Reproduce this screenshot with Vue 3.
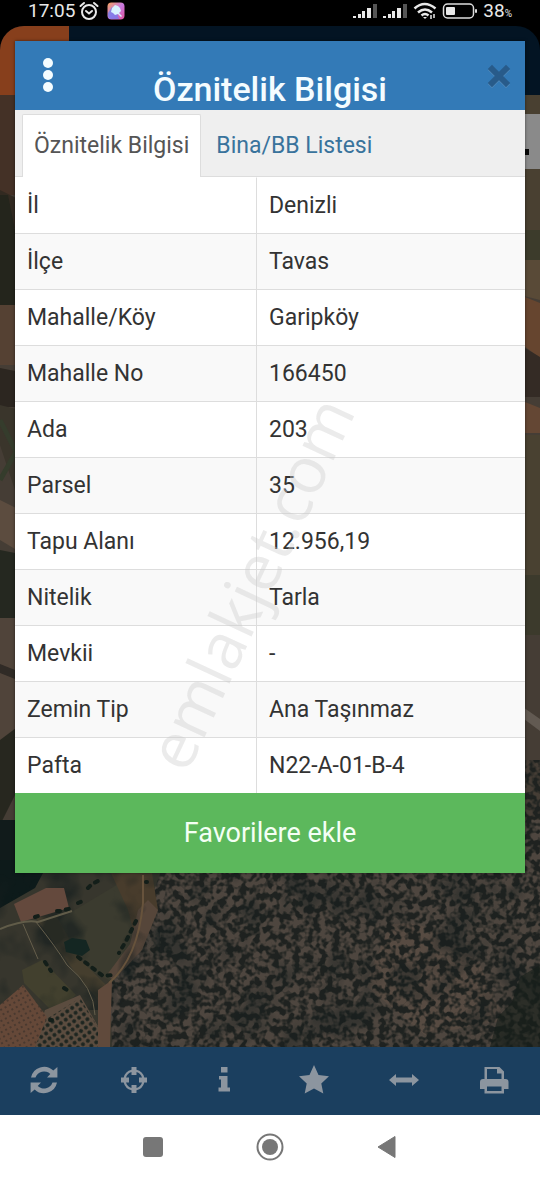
<template>
  <div class="phone">
    <header class="status-bar">
      <div class="status-group">
        <span class="status-time">17:05</span>
        <svg class="icon-alarm" viewBox="0 0 20 20" fill="none" stroke="#e8e8e8" stroke-width="2" stroke-linecap="round">
          <circle cx="10" cy="11" r="7" />
          <path d="M7 10l3 2.500 3-2.500M1.500 5l3.500-3M18.500 5l-3.500-3" />
        </svg>
        <svg class="icon-app" viewBox="0 0 18 18">
          <defs>
            <linearGradient id="appTint" x1="0" y1="0" x2="1" y2="1">
              <stop offset="0" stop-color="#f7a35b" />
              <stop offset="0.5" stop-color="#c77ae0" />
              <stop offset="1" stop-color="#e0529a" />
            </linearGradient>
          </defs>
          <rect x="0.500" y="0.500" width="17" height="17" rx="4" fill="url(#appTint)" />
          <path d="M1 11l4-6 4 3 3 9H5q-4 0-4-4z" fill="#6b7df0" opacity="0.7" />
          <path d="M5 6l3-3 3 1 2 2 1 3-2 2 3 3-1 1-3-3-3 1-2-2-2-1z" fill="#d9f3ff" />
        </svg>
      </div>
      <div class="status-group status-right">
        <svg v-for="n in 2" :key="n" class="icon-signal" viewBox="0 0 25 16">
          <path d="M0 13h3v2H0zM5 11h3v4H5zM9 8h3v7H9zM14 5h4v10h-4z" fill="#e8e8e8" />
          <path d="M20 1h4v14h-4z" fill="#555" />
        </svg>
        <svg class="icon-wifi" viewBox="0 0 24 18" fill="none" stroke="#e8e8e8" stroke-width="2.500">
          <path d="M1.500 6.500q10-9 21 0M5 10.500q7-6 14 0M8.500 13.500q3.500-3 7 0" />
          <path d="M10 15l2 2 2-2z" fill="#e8e8e8" stroke="none" />
          <path d="M18 13v4M21 12v4" stroke-width="1.500" />
        </svg>
        <svg class="icon-battery" viewBox="0 0 36 16">
          <rect x="1.500" y="1" width="30" height="14" rx="4" fill="none" stroke="#ddd" stroke-width="1.500" />
          <rect x="4" y="4" width="9" height="8" rx="1" fill="#e8e8e8" />
          <rect x="33" y="6" width="2" height="4" rx="1" fill="#ddd" />
        </svg>
        <span class="status-percent">38<small>%</small></span>
      </div>
    </header>

    <main class="stage">
      <div class="backdrop" aria-hidden="true">
        <div class="app-bar"><div class="app-bar-mark"></div></div>
        <svg class="map" viewBox="0 95 540 952" preserveAspectRatio="xMidYMax slice">
          <defs>
            <filter id="trees" x="0" y="0" width="1" height="1" color-interpolation-filters="sRGB">
              <feTurbulence type="fractalNoise" baseFrequency="0.15" numOctaves="2" seed="8" />
              <feColorMatrix values="0 0 0 0 0.120  0 0 0 0 0.135  0 0 0 0 0.125  5 0 0 0 -2" />
            </filter>
            <filter id="patches" x="0" y="0" width="1" height="1" color-interpolation-filters="sRGB">
              <feTurbulence type="fractalNoise" baseFrequency="0.025" numOctaves="3" seed="4" />
              <feColorMatrix values="0 0 0 0 0.080  0 0 0 0 0.115  0 0 0 0 0.115  4 0 0 0 -1.900" />
            </filter>
            <pattern id="orchard" width="5" height="5" patternUnits="userSpaceOnUse" patternTransform="rotate(-28)">
              <rect width="5" height="5" fill="#654838" />
              <circle cx="2" cy="2" r="1" fill="#41342b" />
            </pattern>
            <pattern id="saplings" width="6" height="6" patternUnits="userSpaceOnUse" patternTransform="rotate(-35)">
              <circle cx="3" cy="3" r="2" fill="#1c241f" />
            </pattern>
          </defs>
          <rect y="95" width="540" height="952" fill="#453d35" />

          <!-- left fields -->
          <path d="M0 95h20v100H0z" fill="#443126" />
          <path d="M0 190l20 10v28H0z" fill="#322a21" />
          <path d="M0 195h8l7 35v75H0z" fill="#24251c" />
          <path d="M0 305h20v60H0z" fill="#554133" />
          <path d="M0 368l20 4v35H0z" fill="#2c2620" />
          <path d="M0 405l20 5v95l-20-60z" fill="#3a352b" />
          <path d="M0 420l20 40M0 480l20-35" stroke="#353c2c" stroke-width="5" />
          <path d="M0 500l20 10v42l-20-12z" fill="#5c4c3f" />
          <path d="M0 550l20 4v65H0z" fill="#252820" />
          <path d="M0 618h20v110l-20 15z" fill="#50443a" />
          <path d="M0 664l20 8v9l-20-8z" fill="#302b26" />
          <path d="M0 740l20-15v60l-20 40z" fill="#27271f" />
          <path d="M0 820h50v70H0z" fill="#111b1b" />

          <!-- right fields -->
          <path d="M520 95h20v140h-20z" fill="#494031" />
          <path d="M520 230h20v30h-20z" fill="#3c3b2b" />
          <path d="M520 260h20v40l-20-5z" fill="#594a37" />
          <path d="M520 295l20 8v55l-20-15z" fill="#66452f" />
          <path d="M520 345l20 12v40h-20z" fill="#342b25" />
          <path d="M520 400l20 8v25h-20z" fill="#644734" />
          <path d="M520 435h20v140h-20z" fill="#494131" />
          <path d="M520 575h20v60h-20z" fill="#3c3a2c" />
          <path d="M520 705l20 14v12l-20-15z" fill="#625a52" />

          <!-- forest -->
          <path d="M105 820h435v227H105z" fill="#4e463f" />
          <path d="M390 925q40-10 90 40l25 55-80 15-60-50z" fill="#5d4e44" opacity="0.6" />
          <rect x="105" y="760" width="435" height="287" filter="url(#trees)" />
          <rect x="105" y="820" width="435" height="227" filter="url(#patches)" opacity="0.4" />
          <path d="M540 965l-20 12-8 25-14 15-8 30h50z" fill="#151e19" opacity="0.6" />

          <!-- farm land in the lower left corner -->
          <path d="M0 860h165l-20 55-35 70 2 62H0z" fill="#37362d" />
          <path d="M0 860h50l-15 28-35 20z" fill="#0d1a1a" />
          <path d="M55 922l75-45 8 50-25 55-40-20z" fill="#3b3b2f" />
          <path d="M36 918l20-3 25 45 25 25-8 15-27-33z" fill="#453e2e" />
          <path d="M105 860h45l8 50-22 30-8-30z" fill="#483c2c" />
          <path d="M138 910l10-10 10 10-16 40-28 30-8-4 24-32z" fill="#56463a" />
          <path d="M22 970l20-10 34 35-22 18-30-30z" fill="#42402e" />
          <rect x="0" y="860" width="160" height="150" filter="url(#patches)" opacity="0.6" />
          <path d="M14 904l32-16 18 0 5 20-48 14z" fill="#64493d" />
          <path d="M45 1010l35-15 30 52H33z" fill="#5b4c3f" />
          <path d="M45 1020l35-22 30 49H33z" fill="url(#saplings)" />
          <path d="M0 1005l23-20 24 32-12 30H0z" fill="url(#orchard)" />
          <path d="M98 990l14-10-2 67h-12z" fill="#604a3c" />
          <path d="M64 942l8-4 14 2 4 10-8 6-16-4z" fill="#142622" />
          <path d="M0 929q25-10 38-7l34-11" fill="none" stroke="#615c49" stroke-width="2" />
          <path d="M23 924l15 35M36 922q20 25 31 43 27 22 28 50" fill="none" stroke="#655e4b" stroke-width="1" />
          <path d="M143 875v28q-5 55-34 80" fill="none" stroke="#67533c" stroke-width="2" />
          <path d="M35 917l3-1M57 911h3l12-3M78 903l5-2M88 888l4-4 8-4M78 957l12 9 13 10 10-1M136 921l-10 20-7 12M45 962l6 9M64 988l3 2M50 1020h2M146 882h1" fill="none" stroke="#131e19" stroke-width="4" stroke-linecap="round" stroke-dasharray="3 6" />

          <!-- layer box peeking out behind the dialog -->
          <path d="M500 114h40v55h-40z" fill="#8a8a8a" />
          <path d="M524 149h5v6h-5z" fill="#080808" />
        </svg>
      </div>

      <section class="dialog" role="dialog" aria-labelledby="dialog-title">
        <div class="dialog-header">
          <button class="header-btn" type="button" aria-label="Menü">
            <svg class="icon-dots" viewBox="0 0 10 34" fill="#f4fcff">
              <circle cx="5" cy="5" r="5" />
              <circle cx="5" cy="17" r="5" />
              <circle cx="5" cy="29" r="5" />
            </svg>
          </button>
          <h1 id="dialog-title">Öznitelik Bilgisi</h1>
          <button class="header-btn" type="button" aria-label="Kapat">
            <svg class="icon-close" viewBox="0 0 24 24" fill="none" stroke-width="6" stroke-linecap="square">
              <path d="M5 6l14 14M19 6L5 20" stroke="#5289b9" />
              <path d="M5 5l14 14M19 5L5 19" stroke="#285b8a" />
            </svg>
          </button>
        </div>

        <nav class="tabs">
          <a
            v-for="tab in tabs"
            :key="tab"
            href="#"
            class="tab"
            :class="{ active: tab === activeTab }"
            @click.prevent="activeTab = tab"
          >{{ tab }}</a>
        </nav>

        <div class="table-wrap">
          <table>
            <tbody>
              <tr v-for="row in rows" :key="row.label">
                <th scope="row">{{ row.label }}</th>
                <td>{{ row.value }}</td>
              </tr>
            </tbody>
          </table>
          <span class="watermark" aria-hidden="true">emlakjet.com</span>
        </div>

        <button class="favorite-btn" type="button">Favorilere ekle</button>
      </section>
    </main>

    <nav class="toolbar">
      <button v-for="tool in tools" :key="tool.name" class="tool" type="button" :aria-label="tool.name">
        <svg viewBox="0 0 30 30" fill="#8c959f">
          <path :d="tool.path" fill-rule="evenodd" />
        </svg>
      </button>
    </nav>

    <footer class="system-nav">
      <button type="button" aria-label="Son uygulamalar">
        <svg viewBox="0 0 28 28"><rect x="4" y="4" width="20" height="20" rx="3" fill="#777" /></svg>
      </button>
      <button type="button" aria-label="Ana ekran">
        <svg viewBox="0 0 28 28">
          <circle cx="14" cy="14" r="12.500" fill="none" stroke="#777" stroke-width="2" />
          <circle cx="14" cy="14" r="8" fill="#777" />
        </svg>
      </button>
      <button type="button" aria-label="Geri">
        <svg viewBox="0 0 28 28"><path d="M5 14L22 3.500v21z" fill="#777" stroke="#777" stroke-linejoin="round" /></svg>
      </button>
    </footer>
  </div>
</template>

<script setup>
import { ref } from 'vue'

const tabs = ['Öznitelik Bilgisi', 'Bina/BB Listesi']
const activeTab = ref(tabs[0])

const rows = [
  { label: 'İl', value: 'Denizli' },
  { label: 'İlçe', value: 'Tavas' },
  { label: 'Mahalle/Köy', value: 'Garipköy' },
  { label: 'Mahalle No', value: '166450' },
  { label: 'Ada', value: '203' },
  { label: 'Parsel', value: '35' },
  { label: 'Tapu Alanı', value: '12.956,19' },
  { label: 'Nitelik', value: 'Tarla' },
  { label: 'Mevkii', value: '-' },
  { label: 'Zemin Tip', value: 'Ana Taşınmaz' },
  { label: 'Pafta', value: 'N22-A-01-B-4' },
]

const tools = [
  {
    name: 'Yenile',
    path: 'M2 12.500A13.300 13.300 0 0 1 24.300 5.600L28.400 2V12.500H18L21.300 9A9 9 0 0 0 6.500 12.500ZM28 17.500A13.300 13.300 0 0 1 5.700 24.400L1.600 28V17.500H12L8.700 21A9 9 0 0 0 23.500 17.500Z',
  },
  {
    name: 'Konum',
    path: 'M12.500 2h5v2.700A10.600 10.600 0 0 1 25.300 12.500H28v5h-2.700A10.600 10.600 0 0 1 17.500 25.300V28h-5v-2.700A10.600 10.600 0 0 1 4.700 17.500H2v-5h2.700A10.600 10.600 0 0 1 12.500 4.700ZM12.500 7A8.500 8.500 0 0 0 7 12.500h3v5H7A8.500 8.500 0 0 0 12.500 23v-3h5v3A8.500 8.500 0 0 0 23 17.500h-3v-5h3A8.500 8.500 0 0 0 17.500 7v3h-5Z',
  },
  {
    name: 'Bilgi',
    path: 'M12 2h6.500v5.500H12ZM10 11h8.500v11.500H21V26.500H9.500v-4H12v-8h-2Z',
  },
  {
    name: 'Favoriler',
    path: 'M15 0l4.500 10L30 11.200l-7.700 7.200L24.300 28.500 15 23.500 5.700 28.500 7.700 18.400 0 11.200 10.500 10Z',
  },
  {
    name: 'Ölçüm',
    path: 'M0 15l7-6v3.500h16V9l7 6-7 6v-3.500H7V21Z',
  },
  {
    name: 'Yazdır',
    path: 'M5.500 14V2h15L25 6.500V14h1.500q3 0 3 3v7H25v4.500H5.500V24H1v-7q0-3 3-3ZM8 14h14.500V8.500H18V4H8ZM8 21.500V26h14.500v-4.500Z',
  },
]
</script>

<style>
body {
  margin: 0;
  background: #000;
}
</style>

<style scoped>
.phone {
  display: flex;
  flex-direction: column;
  min-height: 100vh;
  font-family: Roboto, "Noto Sans", sans-serif;
  color: #333;
}

button {
  padding: 0;
  border: 0;
  background: none;
  font: inherit;
  cursor: pointer;
}

svg {
  display: block;
}

.status-bar {
  display: flex;
  justify-content: space-between;
  height: 26px;
  padding: 0 28px;
  background: #000;
  color: #e8e8e8;
  font-size: 19px;
  line-height: 24px;
}

.status-group {
  display: flex;
  align-items: center;
  height: 22px;
  gap: 4px;
}

.status-right {
  gap: 5px;
}

.icon-alarm {
  width: 20px;
  height: 20px;
}

.icon-app {
  width: 18px;
  height: 18px;
  margin-left: 4px;
}

.icon-signal {
  width: 25px;
  height: 16px;
}

.icon-wifi {
  width: 24px;
  height: 18px;
}

.icon-battery {
  width: 36px;
  height: 16px;
}

.status-percent small {
  font-size: 10px;
  line-height: 10px;
}

.stage {
  display: grid;
  flex: 1;
}

.backdrop,
.dialog {
  grid-area: 1 / 1;
}

.backdrop {
  display: flex;
  flex-direction: column;
  min-height: 0;
}

.app-bar {
  height: 69px;
  border-radius: 24px 24px 0 0;
  background: #031423;
  overflow: hidden;
}

.app-bar-mark {
  width: 69px;
  height: 100%;
  background: #873f1c;
}

.map {
  flex: 1;
  width: 100%;
  height: 0;
  min-height: 0;
}

.dialog {
  align-self: start;
  min-width: 0;
  margin: 15px 15px 174px;
  box-shadow: 0 0 3px rgba(0, 0, 0, 0.5);
}

.dialog-header {
  display: flex;
  align-items: flex-start;
  justify-content: space-between;
  height: 69px;
  padding: 0 14px;
  background: #337ab7;
}

.dialog-header h1 {
  margin: 28px 0 0;
  color: #f4fcff;
  font-size: 34px;
  font-weight: 500;
  line-height: 40px;
}

.header-btn {
  display: flex;
  justify-content: flex-end;
  width: 36px;
  padding-top: 17px;
}

.header-btn:first-child {
  justify-content: flex-start;
  padding-left: 14px;
}

.icon-dots {
  width: 10px;
  height: 34px;
}

.icon-close {
  width: 24px;
  height: 24px;
  margin-top: 6px;
}

.tabs {
  display: flex;
  height: 66px;
  padding: 0 7px;
  border-bottom: 1px solid #ddd;
  background: #efefef;
}

.tab {
  box-sizing: border-box;
  height: 63px;
  margin-top: 4px;
  padding: 0 11px;
  border: 1px solid transparent;
  border-bottom: 0;
  border-radius: 2px 2px 0 0;
  color: #39739c;
  font-size: 23px;
  line-height: 62px;
  text-decoration: none;
  white-space: nowrap;
}

.tab + .tab {
  margin-left: 3px;
}

.tab.active {
  border-color: #ddd;
  background: #fff;
  color: #555;
}

.table-wrap {
  position: relative;
  background: #fff;
}

table {
  width: 100%;
  border-collapse: separate;
  border-spacing: 0;
  table-layout: fixed;
  font-size: 23px;
}

th,
td {
  box-sizing: border-box;
  height: 56px;
  padding: 0 12px;
  border-top: 1px solid #ddd;
  font-weight: 400;
  line-height: 55px;
  text-align: left;
}

th {
  width: 242px;
  border-right: 1px solid #ddd;
}

tr:nth-child(even) {
  background: #f9f9f9;
}

tr:first-child th,
tr:first-child td {
  border-top-color: transparent;
}

.watermark {
  position: absolute;
  top: 50%;
  left: 50%;
  color: rgba(205, 205, 205, 0.4);
  font-family: "Open Sans", sans-serif;
  font-size: 64px;
  line-height: 64px;
  pointer-events: none;
  transform: translate(-50%, -50%) translate(-20px, 98px) rotate(-65deg);
}

.favorite-btn {
  display: block;
  width: 100%;
  height: 80px;
  background: #5cb85c;
  color: #f4fff4;
  font-size: 27px;
  line-height: 80px;
}

.toolbar {
  display: grid;
  grid-template-columns: repeat(6, 1fr);
  justify-items: center;
  padding: 18px 0 20px;
  background: #1b3f5f;
}

.tool {
  padding-right: 3px;
}

.tool svg {
  width: 30px;
  height: 30px;
}

.system-nav {
  display: flex;
  justify-content: center;
  gap: 89px;
  padding: 18px 0 19px;
  background: #fff;
}

.system-nav svg {
  width: 28px;
  height: 28px;
}
</style>
